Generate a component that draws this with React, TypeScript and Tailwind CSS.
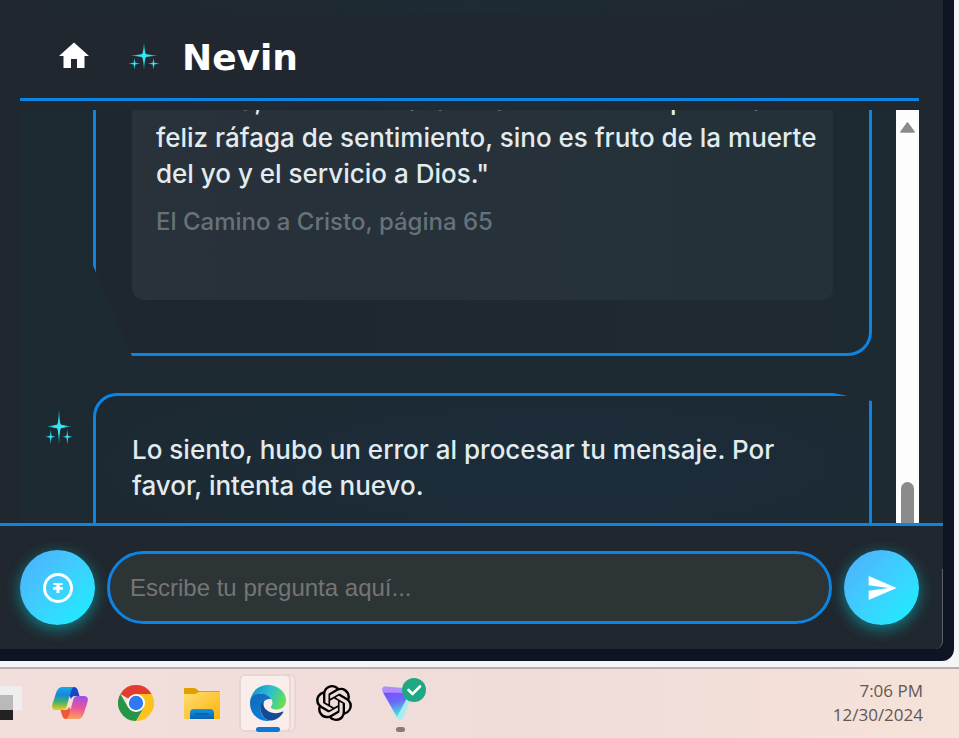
import { MdHome, MdSend } from "react-icons/md";
import { SiOpenai } from "react-icons/si";

function Sparkles({ className, id }: { className: string; id: string }) {
  const glow = `url(#${id})`;
  return (
    <svg viewBox="0 0 32 36" preserveAspectRatio="none" className={className} aria-hidden="true">
      <defs>
        <radialGradient id={id}>
          <stop offset="0" stopColor="#38ecfa" />
          <stop offset=".45" stopColor="#22c4da" />
          <stop offset="1" stopColor="#1b8b9e" stopOpacity=".7" />
        </radialGradient>
      </defs>
      <path d="M16 0 L17.4 15.6 L30 17.5 L17.4 19.4 L16 36 L14.6 19.4 L2 17.5 L14.600 15.600 Z" fill={glow} />
      <path d="M16 10 L18 16 L25 17.500 L18 19 L16 26 L14 19 L7 17.500 L14 16 Z" fill="#35e4f4" />
      <path d="M6.500 20 L7.400 26.800 L12.500 27.800 L7.400 28.800 L6.500 36 L5.600 28.800 L0 27.800 L5.600 26.800 Z" fill={glow} />
      <path d="M25.500 20 L26.400 26.800 L32 27.800 L26.400 28.800 L25.500 36 L24.600 28.800 L19.500 27.800 L24.600 26.800 Z" fill={glow} />
    </svg>
  );
}

function Header() {
  return (
    <header className="mt-3.5 mr-6 ml-5 flex h-[87px] items-center border-b-3 border-[#0c84e4] bg-[#20272e] pl-9">
      <button type="button" aria-label="Inicio" className="text-white">
        <MdHome size={36} />
      </button>
      <Sparkles id="spark-head" className="ml-9 h-7 w-8" />
      <h1 className="ml-[22px] pt-1 font-['DejaVu_Sans',sans-serif] text-4xl font-bold text-white">Nevin</h1>
    </header>
  );
}

function Messages() {
  return (
    <div className="mt-[9px] mr-6 ml-5 flex h-[413px] overflow-hidden bg-[#1e2a32]">
      <div className="flex min-w-0 flex-1 flex-col pr-6 pl-[73px] font-['Inter',sans-serif] text-[26px]/9 font-medium text-[#e2ebee]">
        <article className="-mt-[66px] rounded-[24px] rounded-bl-none border-3 border-[#0c84e4] bg-linear-to-r from-[#1e262e] to-[#1e2a32] p-9 pb-[53px] [clip-path:polygon(0_0,100%_0,100%_100%,5%_100%,0_71%)]">
          <blockquote className="rounded-xl bg-linear-to-r from-[#293139] to-[#243139] pr-3 pb-[60px] pl-6">
            <p className="mb-px">o un día, sino de toda la vida. No se tiene por una</p>
            <p>feliz ráfaga de sentimiento, sino es fruto de la muerte del yo y el servicio a Dios."</p>
            <cite className="mt-3 block text-2xl/9 text-[#66727a] not-italic">El Camino a Cristo, página 65</cite>
          </blockquote>
        </article>
        <div className="relative mt-[37px]">
          <Sparkles id="spark-msg" className="absolute top-4 -left-12 h-9 w-7" />
          <article className="h-[180px] rounded-[24px] rounded-tr-none border-3 border-[#0c84e4] bg-radial-[at_60%_40%] from-[#1b2d3b] to-[#1e282f] p-9 [clip-path:polygon(0_0,95%_0,100%_8px,100%_100%,0_100%)]">
            <p>Lo siento, hubo un error al procesar tu mensaje. Por favor, intenta de nuevo.</p>
          </article>
        </div>
      </div>
      <div className="flex w-[23px] shrink-0 flex-col items-center justify-between bg-[#fdfdfd]" aria-hidden="true">
        <svg viewBox="0 0 15 11" className="mt-3 h-[11px] w-[15px]">
          <path d="M7.5 1 L14 10 H1 Z" fill="#8b8b8b" stroke="#8b8b8b" strokeWidth="1.6" strokeLinejoin="round" />
        </svg>
        <div className="h-[41px] w-[13px] rounded-t-full bg-[#8b8b8b]" />
      </div>
    </div>
  );
}

const round =
  "flex size-[75px] shrink-0 items-center justify-center rounded-full bg-linear-135 from-[#4facfe] to-[#00f2fe] text-white shadow-[0_4px_15px_rgba(0,242,254,0.45)]";

function Composer() {
  return (
    <form className="flex h-[126px] items-center gap-3 rounded-br-lg border-t-3 border-[#0c84e4] bg-[#20272e] pr-6 pl-5" onSubmit={(e) => e.preventDefault()}>
      <button type="button" aria-label="Adjuntar" className={round}>
        <svg viewBox="0 0 30 30" className="size-[30px]" fill="none" stroke="currentColor">
          <circle cx="15" cy="15" r="13.5" strokeWidth="3" />
          <path d="M10.5 11 H19.5" strokeWidth="2" />
          <path d="M13.5 11 H16.500 V13.500 L20 14.500 V16.800 H16.500 V20 H13.500 V16.800 H10 V14.500 L13.500 13.500 Z" fill="currentColor" stroke="none" />
        </svg>
      </button>
      <input
        aria-label="Pregunta"
        placeholder="Escribe tu pregunta aquí..."
        className="h-[73px] min-w-0 flex-1 rounded-full border-3 border-[#0c84e4] bg-[#2d3436] px-5 font-['Liberation_Sans',sans-serif] text-2xl text-white placeholder:text-[#757575]"
      />
      <button type="submit" aria-label="Enviar" className={round}>
        <MdSend size={32} />
      </button>
    </form>
  );
}

function TaskView() {
  return (
    <svg viewBox="0 0 36 36" className="size-9">
      <rect x="0" y="9" width="27" height="26" fill="#222" />
      <rect x="8" y="1" width="28" height="24" fill="#eeeeee" />
      <rect x="0" y="10" width="27" height="15" fill="#b9b9b9" />
    </svg>
  );
}

function Copilot() {
  return (
    <svg viewBox="0 0 36 36" className="size-9">
      <defs>
        <linearGradient id="cpA" x1="0" y1="0" x2="0" y2="1">
          <stop offset="0" stopColor="#16a9ea" />
          <stop offset=".35" stopColor="#1787d8" />
          <stop offset=".65" stopColor="#45b06c" />
          <stop offset="1" stopColor="#f0cc12" />
        </linearGradient>
        <linearGradient id="cpB" x1=".4" y1="0" x2=".3" y2="1">
          <stop offset="0" stopColor="#a04fe8" />
          <stop offset=".5" stopColor="#ec5496" />
          <stop offset="1" stopColor="#fba25c" />
        </linearGradient>
      </defs>
      <path d="M17 2 H22 Q25 2 26 6 L27.500 11 H23 Q20 11 19 14 L16 8 Z" fill="#1746c8" />
      <path d="M19 34 H14 Q11 34 10 30 L8.500 25 H13 Q16 25 17 22 L21 28 Z" fill="#ee5a34" />
      <path d="M10 2 H23 Q20 2 19 6 L14.500 22 Q13.500 25 10 25 H4 Q-1 25 .5 19 L4 8 Q6 2 10 2 Z" fill="url(#cpA)" />
      <path d="M26 34 H13 Q16 34 17 30 L21.500 14 Q22.500 11 26 11 H32 Q37 11 35.500 17 L32 28 Q30 34 26 34 Z" fill="url(#cpB)" />
    </svg>
  );
}

function Chrome() {
  return (
    <svg viewBox="0 0 36 36" className="size-9">
      <path d="M18 18 L2.410 9 A18 18 0 0 1 33.590 9 Z" fill="#e33b2e" />
      <path d="M18 9 H33.590 A18 18 0 0 1 18 36 L25.800 22.500 Z" fill="#fcc31e" />
      <path d="M10.200 22.500 L2.410 9 A18 18 0 0 0 18 36 L25.800 22.500 Z" fill="#269547" />
      <circle cx="18" cy="18" r="9" fill="#fff" />
      <circle cx="18" cy="18" r="7.200" fill="#2f7af0" />
    </svg>
  );
}

function Folder() {
  return (
    <svg viewBox="0 0 36 36" className="size-9">
      <defs>
        <linearGradient id="fold" x1="0" y1="0" x2="1" y2="1">
          <stop offset="0" stopColor="#ffdc70" />
          <stop offset="1" stopColor="#fbb50a" />
        </linearGradient>
        <linearGradient id="foldTab" x1="0" y1="0" x2="0" y2="1">
          <stop offset="0" stopColor="#1595e0" />
          <stop offset="1" stopColor="#0762b4" />
        </linearGradient>
      </defs>
      <path d="M0 4 Q0 3 1 3 H11 L15 6 H35 Q36 6 36 8 V12 H0 Z" fill="#e0a000" />
      <path d="M0 9 H11 L15 7 H36 V33 Q36 34 35 34 H1 Q0 34 0 33 Z" fill="url(#fold)" />
      <path d="M6 34 V28 Q6 24 10 24 H26 Q30 24 30 28 V34 Z" fill="url(#foldTab)" />
      <path d="M11 29 H25" stroke="#064f92" strokeWidth="1" />
    </svg>
  );
}

function Edge() {
  return (
    <svg viewBox="0 0 36 36" className="relative size-9">
      <defs>
        <linearGradient id="edA" x1="0" y1=".3" x2="1" y2=".6">
          <stop offset="0" stopColor="#168fd0" />
          <stop offset=".5" stopColor="#2cbfd0" />
          <stop offset="1" stopColor="#68e04a" />
        </linearGradient>
        <linearGradient id="edB" x1="0" y1="0" x2=".6" y2="1">
          <stop offset="0" stopColor="#1267b4" />
          <stop offset="1" stopColor="#0a82dc" />
        </linearGradient>
      </defs>
      <path d="M0 17 C1 7 8 0 18 0 C28 0 36 7 36 15 C36 21 32 24.500 27 24.500 C23 24.500 20.500 23 21 21.500 C22 20 22.500 19 22.500 17.500 C22 12 16 8.500 10.500 8.500 C5 8.500 1 12 0 17 Z" fill="url(#edA)" />
      <path d="M0 18 C0 12 5 8.500 10.500 8.500 C16 8.500 20 11.500 21.500 14.500 C17 12.500 10.500 18 10.500 24 C10.500 30 15 35 20.500 35.800 C9 37.500 0 29 0 18 Z" fill="url(#edB)" />
      <path d="M14.500 15.500 C11 18 10 21 10.500 25 C11.500 31 16 36 22 35.500 C27 34.500 31 31.500 33.200 27.500 C33.600 26.600 33 26.400 32.200 26.800 C24 30.500 13.500 26 13.500 19 C13.500 17.500 14 16.300 14.500 15.500 Z" fill="#134c94" />
    </svg>
  );
}

function ProtonVpn() {
  return (
    <svg viewBox="0 0 44 44" className="size-11 shrink-0">
      <defs>
        <linearGradient id="pvA" x1="0" y1="0" x2=".3" y2="1">
          <stop offset="0" stopColor="#7b4bff" />
          <stop offset=".5" stopColor="#6a6cf8" />
          <stop offset="1" stopColor="#48e0d8" />
        </linearGradient>
      </defs>
      <path d="M0 13 Q-1 8 4 8.500 L32 10 L22 39 Q18 45 14 39 Z" fill="#a9ecf0" />
      <path d="M0 12 Q0 8 4 8.500 L30 11 L25 16 L1 14.500 Z" fill="#b18cff" />
      <path d="M1 14.500 L23 15 Q27 16 25 20 L15 39 Z" fill="url(#pvA)" />
      <circle cx="32" cy="12" r="12" fill="#1fa884" />
      <path d="M26.500 12 L30.500 16 L38 8.500" fill="none" stroke="#fff" strokeWidth="2.600" strokeLinecap="round" />
    </svg>
  );
}

const app = "flex h-[58px] w-[54px] shrink-0 items-center justify-center";

function Taskbar() {
  return (
    <footer className="flex h-[71px] items-center justify-between border-t-2 border-[#b9aeae] bg-linear-to-r from-[#f2deda] via-[#f0dcd8] to-[#f5e2d8] pr-9 pb-0.5">
      <nav aria-label="Barra de tareas" className="-ml-[23px] flex gap-3">
        <button type="button" aria-label="Vista de tareas" className={app}><TaskView /></button>
        <button type="button" aria-label="Copilot" className={app}><Copilot /></button>
        <button type="button" aria-label="Chrome" className={app}><Chrome /></button>
        <button type="button" aria-label="Explorador" className={app}><Folder /></button>
        <button type="button" aria-label="Edge" className="relative flex h-[58px] w-[54px] shrink-0 items-center justify-center">
          <span className="absolute inset-y-0 -right-px w-6 rounded-md border-2 border-[#e9d6d3] bg-[#f5e6e3]" />
          <span className="absolute inset-y-0 -left-0.5 w-[52px] rounded-md border-2 border-[#e9d6d3] bg-[#f9eeec]" />
          <Edge />
          <span className="absolute bottom-0 h-[5px] w-6 rounded-full bg-[#0b78d8]" />
        </button>
        <button type="button" aria-label="ChatGPT" className={app}><SiOpenai size={36} /></button>
        <button type="button" aria-label="Proton VPN" className="relative flex h-[58px] w-[54px] shrink-0 items-start pt-1 pl-[9px]">
          <ProtonVpn />
          <span className="absolute bottom-0 left-[23px] h-[5px] w-[9px] rounded-full bg-[#857a78]" />
        </button>
      </nav>
      <div className="text-right font-['Open_Sans',sans-serif] text-[17px]/6 text-[#625755]">
        <p>7:06 PM</p>
        <p>12/30/2024</p>
      </div>
    </footer>
  );
}

export default function App() {
  return (
    <div className="min-h-screen overflow-hidden bg-[#f5f4f6]">
      <div className="mr-[5px] mb-1.5 rounded-br-xl bg-[#0e1424] pr-[11px] pb-3">
        <main className="relative flow-root rounded-br-lg bg-linear-to-r from-[#20272e] via-[#1d2b34] to-[#20272e]">
          <Header />
          <Messages />
          <Composer />
          <span className="pointer-events-none absolute right-0 bottom-0 h-20 w-2 rounded-br-lg border-r border-[#59616a]" />
        </main>
      </div>
      <Taskbar />
    </div>
  );
}
